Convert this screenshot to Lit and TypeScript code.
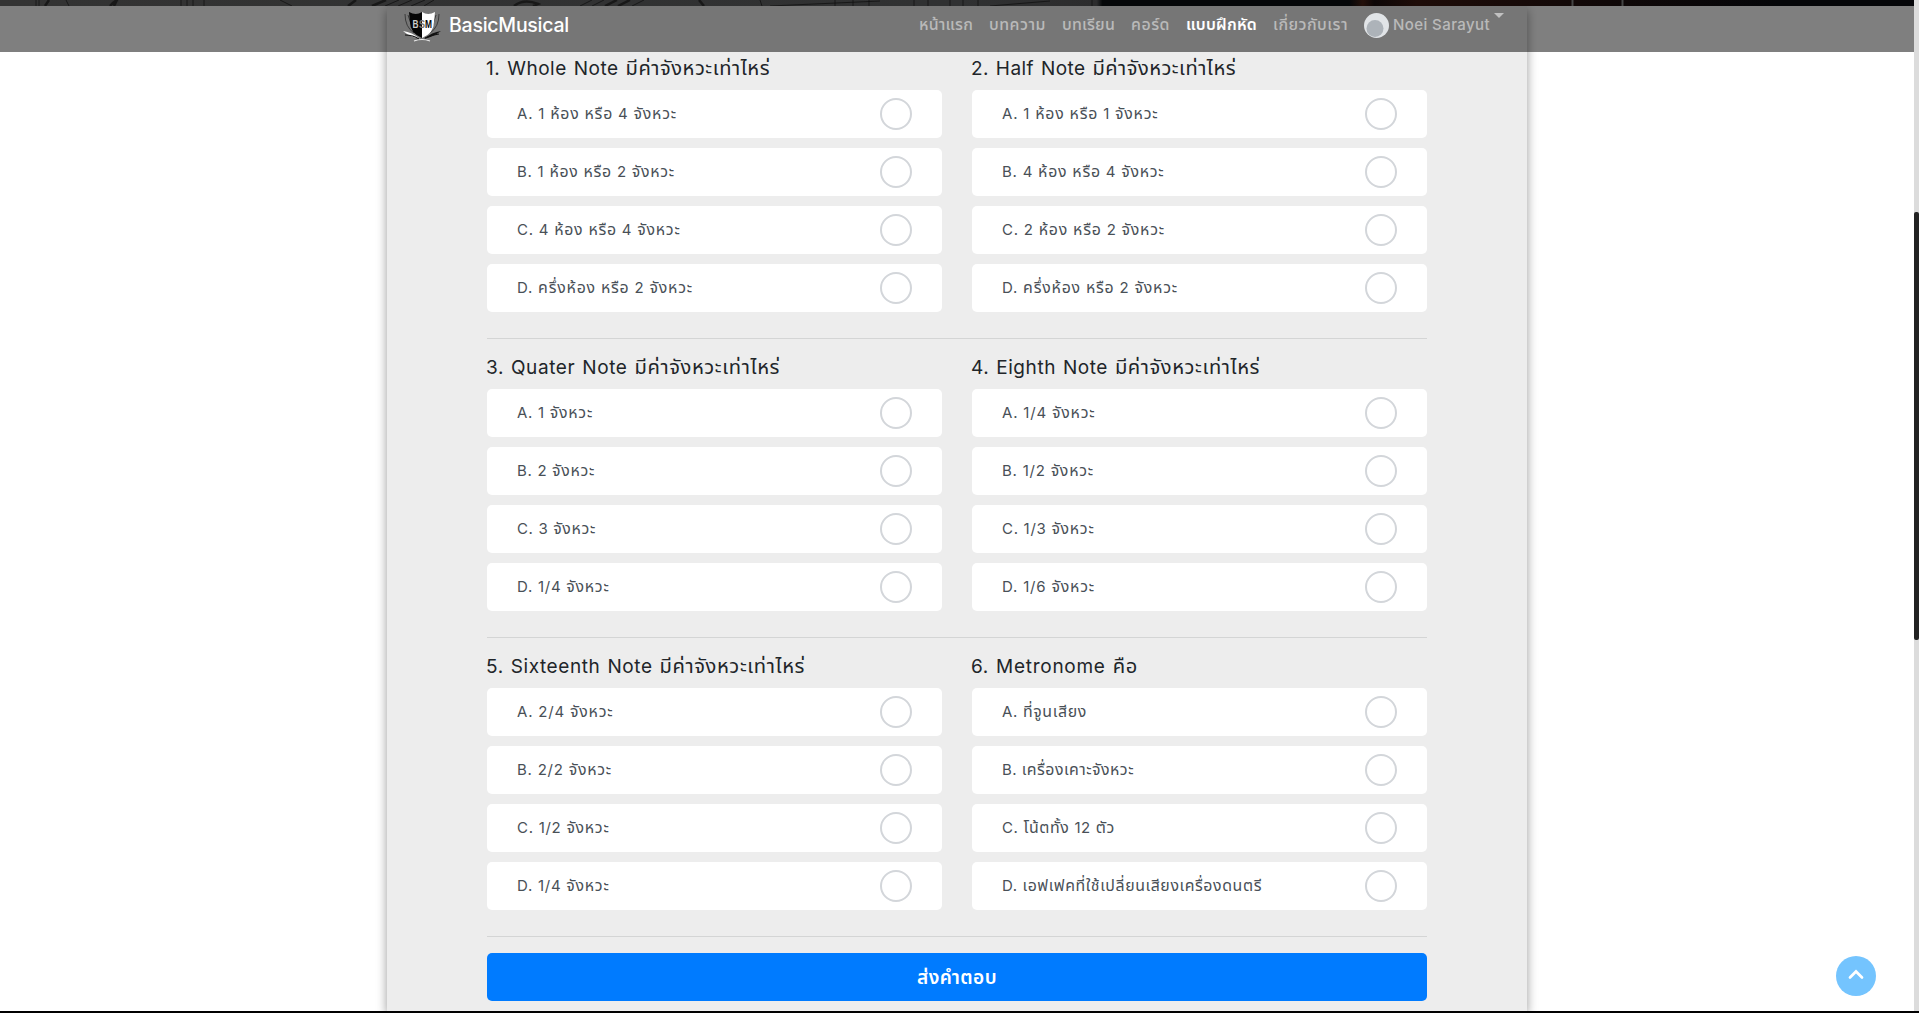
import { LitElement, html, css } from "lit";
import { customElement, property } from "lit/decorators.js";

/** A single line of text, tracked so that it takes a given width. */
@customElement("fit-text")
class FitText extends LitElement {
  @property({ type: Number }) width = 0;
  @property() text = "";
  static styles = css`
    :host { display: inline-block; white-space: nowrap; }
    .run { display: inline-block; white-space: pre; }
    .thai { font-size: 1.06em; }
  `;
  render() {
    const parts = this.text.split(/([\u0e00-\u0e7f]+)/).filter(Boolean);
    return html`<span class="run">${parts.map((p) => (/[\u0e00-\u0e7f]/.test(p) ? html`<span class="thai">${p}</span>` : p))}</span>`;
  }
  updated() {
    const run = this.renderRoot.querySelector(".run") as HTMLElement;
    run.style.letterSpacing = "0px";
    const clusters = [...new (Intl as any).Segmenter("th", { granularity: "grapheme" }).segment(this.text)].length;
    const natural = run.getBoundingClientRect().width;
    if (this.width && clusters > 1) {
      run.style.letterSpacing = `${(this.width - natural) / clusters}px`;
    }
  }
}

type Line = [string, number];
interface Question { title: Line; answers: Line[]; }

const questions: Question[][] = [
  [
    { title: ["1. Whole Note มีค่าจังหวะเท่าไหร่", 284], answers: [["A. 1 ห้อง หรือ 4 จังหวะ", 160], ["B. 1 ห้อง หรือ 2 จังหวะ", 158], ["C. 4 ห้อง หรือ 4 จังหวะ", 163.5], ["D. ครึ่งห้อง หรือ 2 จังหวะ", 176]] },
    { title: ["2. Half Note มีค่าจังหวะเท่าไหร่", 265], answers: [["A. 1 ห้อง หรือ 1 จังหวะ", 156.5], ["B. 4 ห้อง หรือ 4 จังหวะ", 162.5], ["C. 2 ห้อง หรือ 2 จังหวะ", 163], ["D. ครึ่งห้อง หรือ 2 จังหวะ", 176]] },
  ],
  [
    { title: ["3. Quater Note มีค่าจังหวะเท่าไหร่", 294], answers: [["A. 1 จังหวะ", 76], ["B. 2 จังหวะ", 78], ["C. 3 จังหวะ", 79], ["D. 1/4 จังหวะ", 92.5]] },
    { title: ["4. Eighth Note มีค่าจังหวะเท่าไหร่", 289], answers: [["A. 1/4 จังหวะ", 93.5], ["B. 1/2 จังหวะ", 92], ["C. 1/3 จังหวะ", 92.5], ["D. 1/6 จังหวะ", 93]] },
  ],
  [
    { title: ["5. Sixteenth Note มีค่าจังหวะเท่าไหร่", 319], answers: [["A. 2/4 จังหวะ", 96.5], ["B. 2/2 จังหวะ", 95], ["C. 1/2 จังหวะ", 92.5], ["D. 1/4 จังหวะ", 92.5]] },
    { title: ["6. Metronome คือ", 167], answers: [["A. ที่จูนเสียง", 85], ["B. เครื่องเคาะจังหวะ", 132], ["C. โน้ตทั้ง 12 ตัว", 113], ["D. เอฟเฟคที่ใช้เปลี่ยนเสียงเครื่องดนตรี", 260]] },
  ],
];

const links: { text: string; width: number; active?: boolean }[] = [
  { text: "หน้าแรก", width: 54 },
  { text: "บทความ", width: 57 },
  { text: "บทเรียน", width: 53 },
  { text: "คอร์ด", width: 39 },
  { text: "แบบฝึกหัด", width: 71, active: true },
  { text: "เกี่ยวกับเรา", width: 75 },
];

@customElement("app-root")
class AppRoot extends LitElement {
  static styles = css`
    :host {
      display: block; position: relative; height: 1013px; overflow: hidden; background: #fff;
      font-family: Inter, "Noto Sans Thai", "Noto Sans", sans-serif; color: #212529; box-sizing: border-box;
    }
    * { box-sizing: border-box; }
    .view { display: flex; height: 1011px; overflow: hidden; }
    .page { flex: 1; display: flex; flex-direction: column; min-width: 0; }
    .hero { height: 6px; flex: none; display: block; width: 100%; }
    .panel {
      width: 1140px; height: 1005px; flex: none; margin-left: 387px; padding: 46px 100px 0;
      background: #ededed; box-shadow: 0 4px 10px rgba(0, 0, 0, .4);
    }
    .clip { flex: 1; overflow: hidden; }
    .nav {
      position: absolute; left: 0; top: 6px; width: 1914px; height: 46px; padding: 0 410px 0 402px;
      display: flex; align-items: flex-start; background: rgba(0, 0, 0, .5); font-weight: 500;
    }
    .logo { width: 40px; height: 30px; margin: 6px 7px 0 0; flex: none; }
    .brand { color: #fff; font-size: 19.500px; line-height: 28px; margin-top: 5px; }
    .links { display: flex; gap: 16px; margin-left: auto; padding-top: 7px; }
    .link { font-size: 15px; line-height: 24px; color: rgba(255, 255, 255, .5); }
    .active { color: #fff; font-weight: 600; }
    .user { display: flex; align-items: flex-start; margin-left: 0; }
    .avatar { width: 25px; height: 25px; margin-right: 4px; }
    .caret { border: 5px solid transparent; border-top-color: rgba(255, 255, 255, .55); border-bottom: 0; margin-left: 4px; }
    .row { display: grid; grid-template-columns: 455px 455px; column-gap: 30px; height: 287px; border-bottom: 1px solid #d4d5d5; margin-bottom: 12px; }
    .q { display: flex; flex-direction: column; gap: 10px; }
    .title { font-size: 19px; line-height: 24px; height: 28px; padding-top: 4px; word-spacing: 1px; white-space: nowrap; }
    .title fit-text { margin-left: -1px; }
    .answer {
      height: 48px; background: #fff; border-radius: 5px; padding: 0 30px; display: flex; align-items: center;
      justify-content: space-between; font-size: 15px; color: #495057; word-spacing: 0;
    }
    .radio { width: 32px; height: 32px; border: 2px solid #d3d6da; border-radius: 50%; }
    .submit {
      display: flex; align-items: center; justify-content: center; width: 940px; height: 48px; margin-top: 16px; border: 0; border-radius: 5px;
      background: #007bff; color: #fff; font: inherit; font-weight: 600; font-size: 18px; padding: 2px 0 0;
    }
    .bar { width: 5px; flex: none; background: #dcdcdc; padding-top: 212px; }
    .thumb { height: 428px; background: #222; border-radius: 2px; }
    .top { position: absolute; left: 1836px; top: 956px; width: 40px; height: 40px; }
    .edge { height: 2px; background: #000; }
  `;

  private question(q: Question) {
    return html`<section class="q">
      <div class="title"><fit-text .text=${q.title[0]} .width=${q.title[1]}></fit-text></div>
      ${q.answers.map(([text, width]) => html`<label class="answer"><fit-text .text=${text} .width=${width}></fit-text><span class="radio"></span></label>`)}
    </section>`;
  }

  render() {
    return html`
      <div class="view">
        <main class="page">
          <svg class="hero" viewBox="0 0 1914 6" preserveAspectRatio="none">
            <defs>
              <linearGradient id="shade">
                <stop offset="0" stop-color="#333"></stop><stop offset=".5" stop-color="#303132"></stop>
                <stop offset=".573" stop-color="#2c2c2d"></stop><stop offset=".576" stop-color="#050709"></stop>
                <stop offset=".705" stop-color="#050709"></stop><stop offset=".712" stop-color="#24100a"></stop>
                <stop offset=".718" stop-color="#0c0606"></stop><stop offset=".74" stop-color="#1e0c08"></stop>
                <stop offset=".84" stop-color="#100808"></stop><stop offset=".93" stop-color="#050609"></stop>
                <stop offset="1" stop-color="#050609"></stop>
              </linearGradient>
            </defs>
            <rect width="1914" height="6" fill="url(#shade)"></rect>
            <g fill="none" stroke="#101010" stroke-opacity=".75">
              <path d="M36 0v6M39 0v6M66 0l3 6M181 0v6M187 0v6M193 0v6M204 0v6M280 0l12 6M385 6l14-6M398 6l14-6M411 6l14-6M424 6l10-6M580 6l12-6M592 6l12-6M632 6l12-6M760 0l2 6M835 0v6M853 0v6M869 0v6M914 0v6M928 0v6M950 0v6M963 0v6M978 0v6M770 6l110-5M990 6l60-5M1092 0v6"></path>
              <path d="M45 6l4-6M110 6q4-5 8-6M114 6l3-6M348 6l8-6M372 6l14-6M514 6q10-8 24-2l-5 2M605 6l12-6M618 6l12-6M699 0l5 6" stroke-width="2.500"></path>
            </g>
            <path d="M1572.500 0v6M1622.500 0v6" stroke="#454545" stroke-width="2"></path>
          </svg>
          <div class="clip"><div class="panel">
            ${questions.map((row) => html`<div class="row">${row.map((q) => this.question(q))}</div>`)}
            <button class="submit"><fit-text text="ส่งคำตอบ" .width=${80}></fit-text></button>
          </div></div>
        </main>
        <div class="bar"><div class="thumb"></div></div>
      </div>
      <div class="edge"></div>
      <nav class="nav">
        <svg class="logo" viewBox="0 0 40 30">
          <path d="M3 2Q3 15 12 21M37 2Q37 15 28 21M6 3l4 12M34 3l-4 12" fill="none" stroke="#3b3b3b" stroke-width="1"></path>
          <path d="M1 19q9 1 17 8q-10-2-17-8z" fill="#fff"></path><path d="M39 19q-9 1-17 8q9-2 17-8z" fill="#111"></path>
          <path d="M3 23q8 0 14 4M37 22q-8 1-14 4" fill="none" stroke="#111" stroke-width="1.200"></path>
          <path d="M7 0q7 4 13 0V26Q8 21 8 10z" fill="#050505"></path>
          <path d="M33 0q-7 4-13 0V26Q32 21 32 10z" fill="#fff"></path>
          <path d="M12 29q8-3 16 0" fill="none" stroke="#eee" stroke-width="1.200"></path>
          <text x="10.500" y="15.500" font-family="Liberation Sans" font-weight="700" font-size="10" fill="#ccc" textLength="6" lengthAdjust="spacingAndGlyphs">B</text>
          <text x="17" y="15.500" font-family="Liberation Sans" font-weight="700" font-size="10" fill="#777" textLength="6" lengthAdjust="spacingAndGlyphs">S</text>
          <text x="23" y="15.500" font-family="Liberation Sans" font-weight="700" font-size="10" fill="#050505" textLength="7" lengthAdjust="spacingAndGlyphs">M</text>
        </svg>
        <span class="brand"><fit-text text="BasicMusical" .width=${120}></fit-text></span>
        <div class="links">
          ${links.map((l) => html`<span class="link ${l.active ? "active" : ""}"><fit-text .text=${l.text} .width=${l.width}></fit-text></span>`)}
          <span class="link user">
            <svg class="avatar" viewBox="0 0 25 25"><circle cx="12.500" cy="12.500" r="12.500" fill="#e1e4e7"></circle><circle cx="11" cy="15.500" r="8.500" fill="#adb3b9"></circle></svg>
            <fit-text text="Noei Sarayut" .width=${97}></fit-text><span class="caret"></span>
          </span>
        </div>
      </nav>
      <svg class="top" viewBox="0 0 40 40"><circle cx="20" cy="20" r="20" fill="#74c4fe"></circle><path d="M14 21.500l6-6l6 6" fill="none" stroke="#fff" stroke-width="2.700" stroke-linecap="round"></path></svg>
    `;
  }
}
